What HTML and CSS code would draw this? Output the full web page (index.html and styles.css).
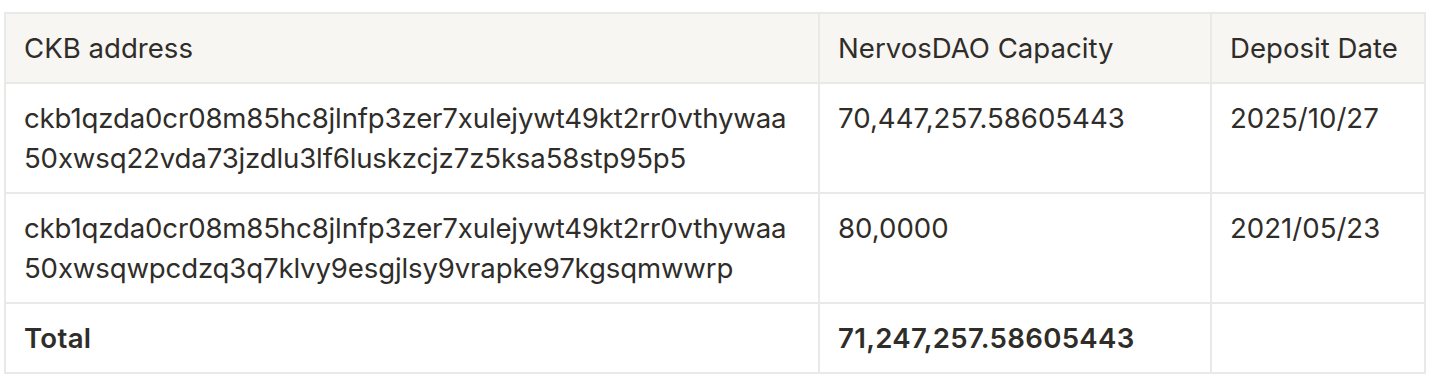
FILE: index.html
```html
<!DOCTYPE html>
<html lang="en">
<head>
<meta charset="utf-8">
<title>NervosDAO deposits</title>
<link rel="stylesheet" href="styles.css">
</head>
<body>
<table class="dao-table">
  <colgroup>
    <col class="col-address">
    <col class="col-capacity">
    <col class="col-date">
  </colgroup>
  <thead>
    <tr>
      <th>CKB address</th>
      <th>NervosDAO Capacity</th>
      <th>Deposit Date</th>
    </tr>
  </thead>
  <tbody>
    <tr>
      <td class="address">ckb1qzda0cr08m85hc8jlnfp3zer7xulejywt49kt2rr0vthywaa50xwsq22vda73jzdlu3lf6luskzcjz7z5ksa58stp95p5</td>
      <td>70,447,257.58605443</td>
      <td>2025/10/27</td>
    </tr>
    <tr>
      <td class="address">ckb1qzda0cr08m85hc8jlnfp3zer7xulejywt49kt2rr0vthywaa50xwsqwpcdzq3q7klvy9esgjlsy9vrapke97kgsqmwwrp</td>
      <td>80,0000</td>
      <td>2021/05/23</td>
    </tr>
    <tr class="total">
      <td>Total</td>
      <td>71,247,257.58605443</td>
      <td></td>
    </tr>
  </tbody>
</table>
</body>
</html>
```

FILE: styles.css
```css
html, body {
  margin: 0;
  padding: 0;
  background: #ffffff;
}

body {
  padding: 12px 4px;
  font-family: Inter, "Noto Sans", sans-serif;
  font-size: 27.6px;
  line-height: 40px;
  color: #2f2d29;
}

.dao-table {
  width: 1420px;
  border-collapse: collapse;
  table-layout: fixed;
}

.col-address { width: 814px; }
.col-capacity { width: 392px; }
.col-date { width: 214px; }

.dao-table th,
.dao-table td {
  border: 2px solid #e9e9e7;
  padding: 14px 18px;
  text-align: left;
  vertical-align: top;
  font-weight: 400;
}

.dao-table th {
  background: #f7f6f3;
}

.address {
  word-break: break-all;
  letter-spacing: -0.15px;
}

.total td {
  font-weight: 600;
  letter-spacing: 0.3px;
}
```
